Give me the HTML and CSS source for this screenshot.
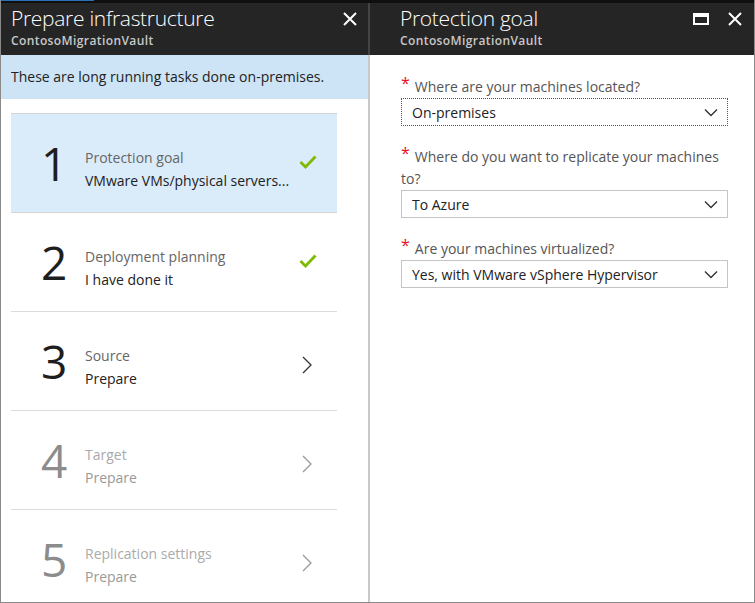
FILE: index.html
```html
<!DOCTYPE html>
<html>
<head>
<meta charset="utf-8">
<link rel="stylesheet" href="styles.css">
</head>
<body>
<div class="frame">
  <div class="topbar"><span class="topbar-accent"></span></div>
  <div class="panels">
    <section class="panel panel-left">
      <header class="blade-header blade-header-left">
        <div class="titles">
          <div class="title">Prepare infrastructure</div>
          <div class="subtitle">ContosoMigrationVault</div>
        </div>
        <div class="actions">
          <svg class="icon-close" width="14" height="14" viewBox="0 0 14 14"><path d="M1 1L13 13M13 1L1 13" stroke="#fff" stroke-width="2" fill="none"/></svg>
        </div>
      </header>
      <div class="blade-body blade-body-left">
        <div class="info">These are long running tasks done on-premises.</div>
        <ul class="steps">
          <li class="step active">
            <div class="num">1</div>
            <div class="text"><div class="t1">Protection goal</div><div class="t2">VMware VMs/physical servers...</div></div>
            <svg class="check" width="18" height="14" viewBox="0 0 18 14"><path d="M1.5 7L6.5 12L16.5 1.5" stroke="#7fba00" stroke-width="2.8" fill="none"/></svg>
          </li>
          <li class="step">
            <div class="num">2</div>
            <div class="text"><div class="t1">Deployment planning</div><div class="t2">I have done it</div></div>
            <svg class="check" width="18" height="14" viewBox="0 0 18 14"><path d="M1.5 7L6.5 12L16.5 1.5" stroke="#7fba00" stroke-width="2.8" fill="none"/></svg>
          </li>
          <li class="step">
            <div class="num">3</div>
            <div class="text"><div class="t1">Source</div><div class="t2">Prepare</div></div>
            <svg class="chev" width="10" height="18" viewBox="0 0 10 18"><path d="M1 1L9 9L1 17" stroke="#333" stroke-width="1.3" fill="none"/></svg>
          </li>
          <li class="step disabled">
            <div class="num">4</div>
            <div class="text"><div class="t1">Target</div><div class="t2">Prepare</div></div>
            <svg class="chev" width="10" height="18" viewBox="0 0 10 18"><path d="M1 1L9 9L1 17" stroke="#999" stroke-width="1.3" fill="none"/></svg>
          </li>
          <li class="step disabled">
            <div class="num">5</div>
            <div class="text"><div class="t1">Replication settings</div><div class="t2">Prepare</div></div>
            <svg class="chev" width="10" height="18" viewBox="0 0 10 18"><path d="M1 1L9 9L1 17" stroke="#999" stroke-width="1.3" fill="none"/></svg>
          </li>
        </ul>
      </div>
    </section>
    <section class="panel panel-right">
      <header class="blade-header blade-header-right">
        <div class="titles">
          <div class="title">Protection goal</div>
          <div class="subtitle">ContosoMigrationVault</div>
        </div>
        <div class="actions">
          <span class="icon-max"></span>
          <svg class="icon-close" width="14" height="14" viewBox="0 0 14 14"><path d="M1 1L13 13M13 1L1 13" stroke="#fff" stroke-width="2" fill="none"/></svg>
        </div>
      </header>
      <div class="blade-body blade-body-right">
        <div class="field">
          <div class="label required">Where are your machines located?</div>
          <div class="select focused"><span>On-premises</span>
            <svg class="down" width="14" height="9" viewBox="0 0 14 9"><path d="M1 1.5L7 7.5L13 1.5" stroke="#333" stroke-width="1.4" fill="none"/></svg></div>
        </div>
        <div class="field">
          <div class="label required">Where do you want to replicate your machines to?</div>
          <div class="select"><span>To Azure</span>
            <svg class="down" width="14" height="9" viewBox="0 0 14 9"><path d="M1 1.5L7 7.5L13 1.5" stroke="#333" stroke-width="1.4" fill="none"/></svg></div>
        </div>
        <div class="field">
          <div class="label required">Are your machines virtualized?</div>
          <div class="select"><span>Yes, with VMware vSphere Hypervisor</span>
            <svg class="down" width="14" height="9" viewBox="0 0 14 9"><path d="M1 1.5L7 7.5L13 1.5" stroke="#333" stroke-width="1.4" fill="none"/></svg></div>
        </div>
      </div>
    </section>
  </div>
</div>
</body>
</html>
```
FILE: styles.css
```css
* { box-sizing: border-box; }
html, body { margin: 0; padding: 0; background: #fff; }
body { font-family: "Open Sans", "Noto Sans", sans-serif; width: 755px; height: 603px; overflow: hidden; }
.frame { width: 755px; height: 603px; display: flex; flex-direction: column; border-left: 1px solid #8a8a8a; border-right: 1px solid #8a8a8a; border-bottom: 1px solid #8a8a8a; overflow: hidden; }
.topbar { height: 3px; flex-shrink: 0; background: #0f0f0f; display: flex; }
.topbar-accent { width: 93px; height: 1px; background: #2a72b8; }
.panels { flex: 1; display: flex; min-height: 0; }
.panel { display: flex; flex-direction: column; min-height: 0; }
.panel-left { width: 369px; }
.panel-right { flex: 1; }
.blade-header { height: 52px; flex-shrink: 0; background: #252525; display: flex; justify-content: space-between; align-items: flex-start; }
.blade-header-left { padding-left: 10px; border-right: 2px solid #444; }
.blade-header-right { padding-left: 30px; }
.title { color: #fff; font-weight: 300; font-size: 21px; line-height: 28px; margin-top: 1px; letter-spacing: -0.3px; }
.subtitle { color: #c8c8c8; font-weight: 600; font-size: 12px; line-height: 15px; margin-top: 1px; letter-spacing: 0.4px; }
.actions { display: flex; align-items: center; gap: 19px; padding-top: 9px; padding-right: 12px; }
.blade-header-left .actions { padding-right: 11px; }
.icon-max { width: 16px; height: 12px; border: 2px solid #fff; border-top-width: 4px; }
.blade-body { flex: 1; min-height: 0; overflow: hidden; }
.blade-body-left { border-right: 2px solid #c8c8c8; }
.info { height: 44px; flex-shrink: 0; background: #cde4f6; color: #222; font-size: 14px; line-height: 44px; padding-left: 10px; }
.steps { list-style: none; margin: 14px 31px 0 10px; padding: 0; }
.step { height: 99px; flex-shrink: 0; border-top: 1px solid #dcdcdc; display: flex; align-items: center; }
.step.active { background: #daebfa; border-top-color: #d4d4d4; }
.step.active + .step { border-top-color: #d4d4d4; }
.num { width: 74px; padding-left: 30px; font-size: 46px; line-height: 50px; color: #1e1e1e; font-weight: 400; }
.text { flex: 1; padding-top: 12px; }
.t1 { font-size: 14px; line-height: 23px; color: #666; }
.t2 { font-size: 14px; line-height: 23px; color: #222; }
.check { margin-right: 20px; margin-top: -2px; }
.chev { margin-right: 25px; margin-top: 8px; }
.step.disabled .num { color: #8c8c8c; }
.step.disabled .t1 { color: #aaa; }
.step.disabled .t2 { color: #999; }
.blade-body-right { padding: 21px 26px 0 31px; }
.field { margin-bottom: 20px; }
.label { font-size: 14px; line-height: 22px; color: #555; }
.label.required::before { content: "*"; color: #e81123; font-size: 16px; line-height: 0; position: relative; top: -3px; margin-right: 5px; }
.select { height: 28px; border: 1px solid #c4c4c4; display: flex; align-items: center; justify-content: space-between; padding: 0 8px 0 10px; font-size: 14px; color: #222; }
.select.focused { border: 1px dotted #1f5fa8; }
.down { margin-right: 1px; }
```
